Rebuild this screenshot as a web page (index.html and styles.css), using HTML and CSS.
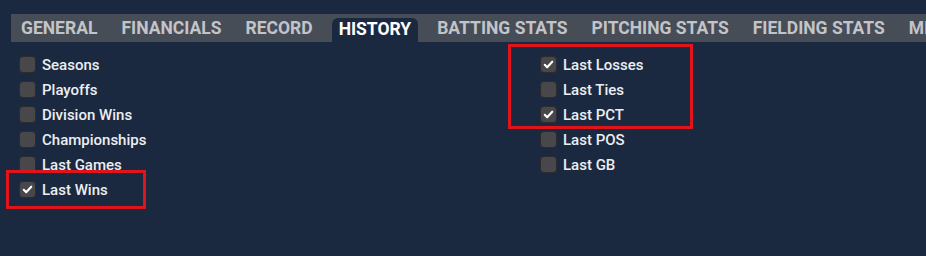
FILE: index.html
```html
<!DOCTYPE html>
<html>
<head>
<meta charset="utf-8">
<link rel="stylesheet" href="styles.css">
</head>
<body>
<div class="page">
  <nav class="tabs">
    <span class="tab">GENERAL</span>
    <span class="tab">FINANCIALS</span>
    <span class="tab">RECORD</span>
    <span class="tab active">HISTORY</span>
    <span class="tab">BATTING STATS</span>
    <span class="tab">PITCHING STATS</span>
    <span class="tab">FIELDING STATS</span>
    <span class="tab">MISC</span>
  </nav>
  <div class="content">
    <div class="col col-left">
      <label class="row"><span class="cb"></span>Seasons</label>
      <label class="row"><span class="cb"></span>Playoffs</label>
      <label class="row"><span class="cb"></span>Division Wins</label>
      <label class="row"><span class="cb"></span>Championships</label>
      <label class="row"><span class="cb"></span>Last Games</label>
      <label class="row"><span class="cb checked"><svg viewBox="0 0 16 16"><path d="M4 8.3l2.6 2.7L12 5" /></svg></span>Last Wins</label>
      <div class="hl hl-left"></div>
    </div>
    <div class="col col-right">
      <label class="row"><span class="cb checked"><svg viewBox="0 0 16 16"><path d="M4 8.3l2.6 2.7L12 5" /></svg></span>Last Losses</label>
      <label class="row"><span class="cb"></span>Last Ties</label>
      <label class="row"><span class="cb checked"><svg viewBox="0 0 16 16"><path d="M4 8.3l2.6 2.7L12 5" /></svg></span>Last PCT</label>
      <label class="row"><span class="cb"></span>Last POS</label>
      <label class="row"><span class="cb"></span>Last GB</label>
      <div class="hl hl-right"></div>
    </div>
  </div>
</div>
</body>
</html>
```

FILE: styles.css
```css
* { box-sizing: border-box; }
html, body {
  margin: 0;
  padding: 0;
  background: #1b2940;
  width: 926px;
  height: 256px;
  overflow: hidden;
  font-family: Roboto, "Liberation Sans", sans-serif;
}
.page {
  padding-top: 14px;
}
.tabs {
  margin-left: 11px;
  height: 28px;
  background: #474d57;
  display: flex;
  align-items: flex-end;
  white-space: nowrap;
  overflow: hidden;
}
.tab {
  font-weight: 700;
  font-size: 17.5px;
  color: #c2c4c8;
  padding: 0 12px;
  height: 24px;
  line-height: 21px;
  flex: none;
}
.tab:first-child {
  padding-left: 10px;
}
.tab.active {
  background: #1b2940;
  color: #ffffff;
  border-radius: 6px 6px 0 0;
  padding: 0 7px;
  margin: 0 7px;
  line-height: 23px;
}
.content {
  display: flex;
  padding-top: 10px;
}
.col {
  position: relative;
  display: flex;
  flex-direction: column;
}
.col-left {
  padding-left: 19px;
  width: 540px;
}
.row {
  display: flex;
  align-items: center;
  height: 25px;
  font-size: 15px;
  font-weight: 500;
  color: #eceef1;
}
.cb {
  width: 17px;
  height: 17px;
  border-radius: 4px;
  background: #48474a;
  border: 1px solid #2c2c30;
  margin-right: 6px;
  flex: none;
  display: flex;
  align-items: center;
  justify-content: center;
}
.cb svg {
  width: 15px;
  height: 15px;
}
.cb svg path {
  fill: none;
  stroke: #ffffff;
  stroke-width: 2.2;
  stroke-linecap: round;
  stroke-linejoin: round;
}
.hl {
  position: absolute;
  border: 3px solid #e2141b;
}
.hl-left {
  left: 6px;
  top: 118px;
  width: 140px;
  height: 39px;
}
.hl-right {
  left: -32px;
  top: -8px;
  width: 185px;
  height: 85px;
}
```
